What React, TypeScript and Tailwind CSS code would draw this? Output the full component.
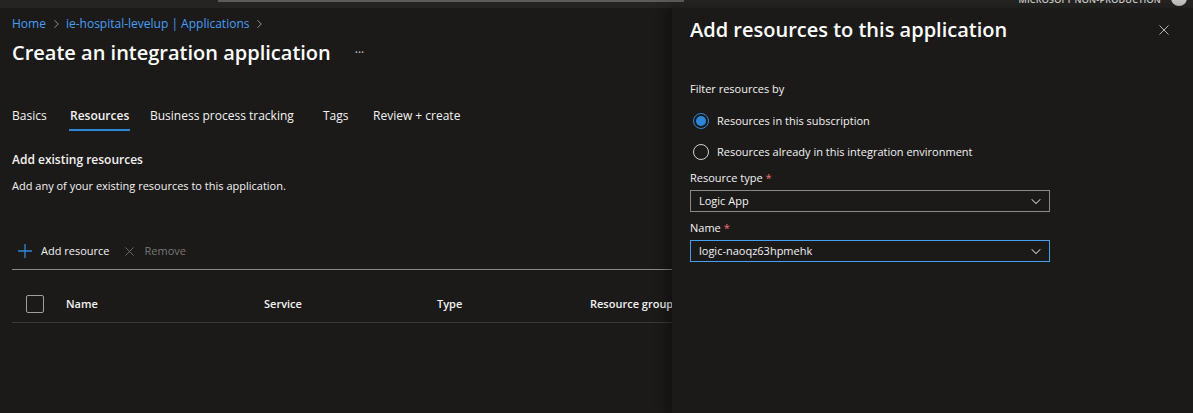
import React from 'react';

const font = { fontFamily: '"Open Sans", "Noto Sans", sans-serif' };

const Chevron = ({ className = '' }: { className?: string }) => (
  <svg className={className} viewBox="0 0 16 16" fill="none" stroke="currentColor" strokeWidth={1.2}>
    <path d="M3 6l5 5 5-5" />
  </svg>
);

const Cross = ({ className = '' }: { className?: string }) => (
  <svg className={className} viewBox="0 0 16 16" fill="none" stroke="currentColor" strokeWidth={1.2}>
    <path d="M2 2l12 12M14 2L2 14" />
  </svg>
);

// tab widths are fixed so the labels land where the portal puts them
const tabs = [
  { label: 'Basics', w: 'w-[58px]' },
  { label: 'Resources', w: 'w-[80px]' },
  { label: 'Business process tracking', w: 'w-[173px]' },
  { label: 'Tags', w: 'w-[50px]' },
  { label: 'Review + create', w: 'w-[100px]' },
];

const Tabs = () => (
  <div className="flex h-[40px] items-center text-[12px] leading-[18px] text-[#f3f2f1]">
    {tabs.map((t, i) => (
      <div key={t.label} className={`${t.w} shrink-0 whitespace-nowrap`}>
        <span className={i === 1 ? 'relative font-semibold' : ''}>
          {t.label}
          {i === 1 && <span className="absolute left-[-1px] right-[-1px] top-[22px] h-[2px] bg-[#2b88d8]" />}
        </span>
      </div>
    ))}
  </div>
);

const Radio = ({ checked, label }: { checked?: boolean; label: string }) => (
  <div className="flex h-[20px] items-center gap-[8px] text-[11px] text-[#f3f2f1]">
    <div
      className={
        checked
          ? 'ml-[3px] flex h-[16px] w-[16px] items-center justify-center rounded-full border border-[#2b88d8]'
          : 'ml-[3px] h-[16px] w-[16px] rounded-full border border-[#d2d0ce]'
      }
    >
      {checked && <div className="h-[10px] w-[10px] rounded-full bg-[#2b88d8]" />}
    </div>
    <span>{label}</span>
  </div>
);

const Dropdown = ({ value, focused }: { value: string; focused?: boolean }) => (
  <div
    className={
      focused
        ? 'flex h-[22px] w-[360px] items-center justify-between border border-[#479ef5] pl-[8px] pr-[6px] text-[11px] text-[#f3f2f1]'
        : 'flex h-[22px] w-[360px] items-center justify-between border border-[#8a8886] pl-[8px] pr-[6px] text-[11px] text-[#f3f2f1]'
    }
  >
    <span>{value}</span>
    <Chevron className="h-[14px] w-[14px] text-[#c8c6c4]" />
  </div>
);

export default function App() {
  return (
    <div className="relative h-[413px] w-[1193px] overflow-hidden bg-[#1b1a19]" style={font}>
      <div className="flex h-[8px] bg-[#252423]">
        <div className="ml-[218px] h-[2px] w-[466px] bg-[#5c5b5a]" />
        <div className="ml-auto mr-[6px] -mt-[6px] flex items-start gap-[10px]">
          <span className="text-[9px] font-semibold leading-[12px] tracking-wide text-[#d2d0ce]">MICROSOFT NON-PRODUCTION</span>
          <div className="mt-[-4px] h-[16px] w-[16px] rounded-full bg-[#c8c6c4]" />
        </div>
      </div>

      <div className="flex">
        {/* main blade */}
        <div className="w-[672px] shrink-0 overflow-hidden pl-[12px]">
          <div className="mt-[7px] flex h-[18px] items-center text-[12px] leading-[18px] text-[#479ef5]">
            <span>Home</span>
            <Chevron className="mx-[4px] h-[12px] w-[12px] -rotate-90 text-[#a19f9d]" />
            <span>ie-hospital-levelup | Applications</span>
            <Chevron className="mx-[4px] h-[12px] w-[12px] -rotate-90 text-[#a19f9d]" />
          </div>
          <div className="mt-[5px] flex h-[30px] items-center">
            <h1 className="text-[20px] font-semibold leading-[30px] text-white">Create an integration application</h1>
            <span className="ml-[24px] text-[12px] text-[#d2d0ce]">···</span>
          </div>

          <div className="mt-[28px]">
            <Tabs />
          </div>

          <div className="mt-[15px] text-[12px] font-semibold leading-[18px] text-[#f3f2f1]">Add existing resources</div>
          <div className="mt-[8px] text-[11px] leading-[18px] text-[#f3f2f1]">
            Add any of your existing resources to this application.
          </div>

          <div className="mt-[45px] flex h-[22px] items-center text-[11px]">
            <svg className="ml-[6px] h-[14px] w-[14px] text-[#2b88d8]" viewBox="0 0 14 14" fill="none" stroke="currentColor" strokeWidth={1.3}>
              <path d="M7 0v14M0 7h14" />
            </svg>
            <span className="ml-[9px] text-[#f3f2f1]">Add resource</span>
            <Cross className="ml-[14px] h-[11px] w-[11px] text-[#797775]" />
            <span className="ml-[10px] text-[#797775]">Remove</span>
          </div>
          <div className="mt-[7px] h-px bg-[#8a8886]" />

          <div className="flex h-[53px] items-center border-b border-[#3b3a39] pt-[16px] text-[11px] font-semibold text-[#f3f2f1]">
            <div className="ml-[14px] h-[18px] w-[18px] shrink-0 rounded-[2px] border border-[#a19f9d]" />
            <div className="ml-[22px] w-[198px] shrink-0">Name</div>
            <div className="w-[173px] shrink-0">Service</div>
            <div className="w-[153px] shrink-0">Type</div>
            <div className="shrink-0 whitespace-nowrap">Resource group</div>
          </div>
        </div>

        {/* side panel */}
        <div className="relative h-[405px] flex-1 bg-[#1b1a19] pl-[18px] shadow-[-6px_0_10px_rgba(0,0,0,0.35)]">
          <div className="mt-[8px] flex h-[28px] items-center">
            <h2 className="text-[20px] font-semibold text-white">Add resources to this application</h2>
            <Cross className="ml-auto mr-[23px] h-[12px] w-[12px] text-[#c8c6c4]" />
          </div>

          <div className="mt-[36px] text-[11px] leading-[18px] text-[#f3f2f1]">Filter resources by</div>
          <div className="mt-[13px]">
            <Radio checked label="Resources in this subscription" />
          </div>
          <div className="mt-[11px]">
            <Radio label="Resources already in this integration environment" />
          </div>

          <div className="mt-[7px] text-[11px] leading-[18px] text-[#f3f2f1]">
            Resource type <span className="text-[#f1707b]">*</span>
          </div>
          <div className="mt-[3px]">
            <Dropdown value="Logic App" />
          </div>
          <div className="mt-[7px] text-[11px] leading-[18px] text-[#f3f2f1]">
            Name <span className="text-[#f1707b]">*</span>
          </div>
          <div className="mt-[3px]">
            <Dropdown value="logic-naoqz63hpmehk" focused />
          </div>
        </div>
      </div>
    </div>
  );
}
